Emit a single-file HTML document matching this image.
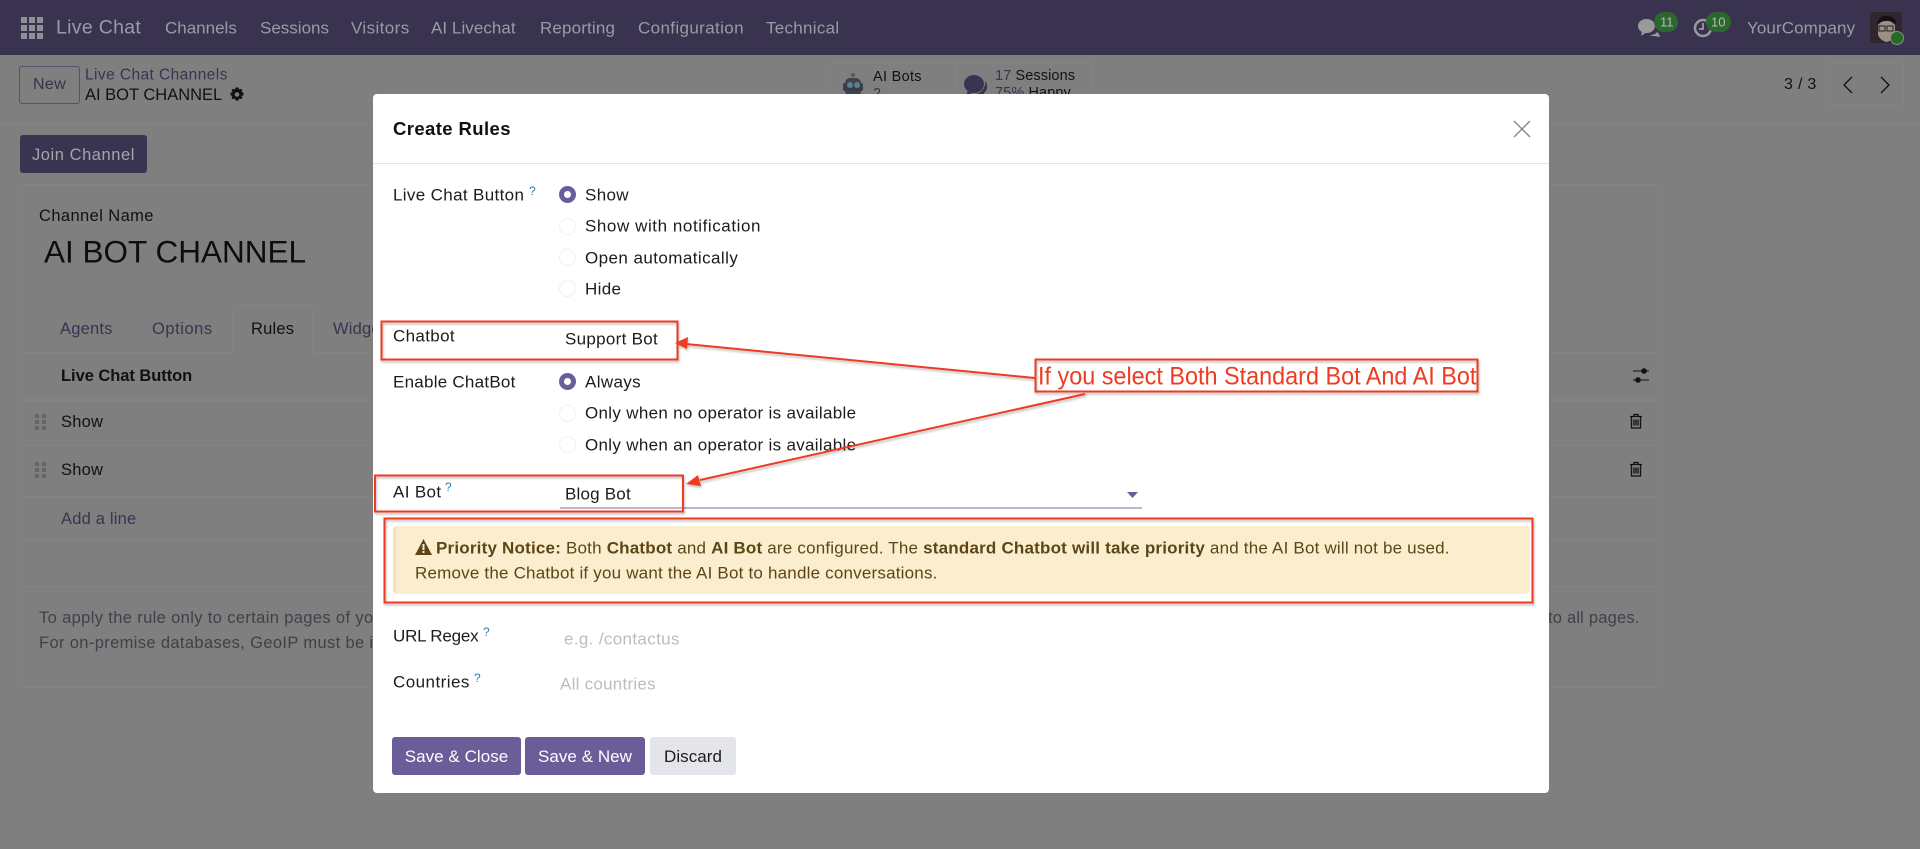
<!DOCTYPE html>
<html><head><meta charset="utf-8"><title>Create Rules</title>
<style>
html,body{margin:0;padding:0;width:1920px;height:849px;overflow:hidden;background:#7f7f7f;font-family:"Liberation Sans",sans-serif}
.t{position:absolute;white-space:nowrap;line-height:1;transform:translateY(-50%);font-size:17px;letter-spacing:.35px;color:#111}
.b{position:absolute;box-sizing:border-box}
.n{color:#9c9aa3;font-size:17px;letter-spacing:.1px}
.s{color:#3a3450}
.q{color:#2a7fb5;font-size:12px;letter-spacing:0}
.r{position:absolute;box-sizing:border-box;width:17px;height:17px;border-radius:50%;border:1px solid #f1f1f1;background:#fff}
.r.c{border:0;background:#6b5e98}
.r.c:after{content:"";position:absolute;left:5px;top:5px;width:7px;height:7px;border-radius:50%;background:#fff}
.m{color:#1c1c1c}
.bt{position:absolute;box-sizing:border-box;top:737px;height:38px;border-radius:3px;background:#6b5e98;color:#fff;font-size:17px;letter-spacing:.05px;line-height:39px;text-align:center}
#modal{position:absolute;left:373px;top:94px;width:1176px;height:699px;background:#fff;border-radius:4px}
.al{color:#5d4616;font-size:17px;letter-spacing:.2px}
.l{position:absolute;left:21px;width:1640px;height:1px;background:#848484}
</style></head><body>
<!-- navbar -->
<div class="b" style="left:0;top:0;width:1920px;height:55px;background:#393350;border-bottom:1px solid #35304a"></div>
<svg style="position:absolute;left:21px;top:17px" width="22" height="22" fill="#8f8e96"><rect width="6" height="6"/><rect x="8" width="6" height="6"/><rect x="16" width="6" height="6"/><rect y="8" width="6" height="6"/><rect x="8" y="8" width="6" height="6"/><rect x="16" y="8" width="6" height="6"/><rect y="16" width="6" height="6"/><rect x="8" y="16" width="6" height="6"/><rect x="16" y="16" width="6" height="6"/></svg>
<span class="t n" style="left:56px;top:28px;font-size:19.5px;letter-spacing:.3px">Live Chat</span>
<span class="t n" style="left:165px;top:28px;letter-spacing:0">Channels</span>
<span class="t n" style="left:260px;top:28px;letter-spacing:0">Sessions</span>
<span class="t n" style="left:351px;top:28px;letter-spacing:.4px">Visitors</span>
<span class="t n" style="left:431px;top:28px;letter-spacing:.05px">AI Livechat</span>
<span class="t n" style="left:540px;top:28px;letter-spacing:.15px">Reporting</span>
<span class="t n" style="left:638px;top:28px;letter-spacing:.37px">Configuration</span>
<span class="t n" style="left:766px;top:28px;letter-spacing:.28px">Technical</span>
<svg style="position:absolute;left:1637px;top:16px" width="24" height="22" fill="#9a9a9e"><ellipse cx="9.500" cy="10" rx="8.500" ry="7"/><path d="M5 15l-1 5 6-4zM13 19c3 0 6-1 7-3 2 1 3 5 3 5l-6-1c-1 0-3 0-4-1z"/></svg>
<span class="b" style="left:1654px;top:12px;width:24px;height:20px;border-radius:10px;background:#2b672e"></span>
<span class="t" style="left:1660px;top:22px;font-size:13px;letter-spacing:0;color:#b4bcb2">11</span>
<svg style="position:absolute;left:1693px;top:16px" width="20" height="22" fill="none" stroke="#9a9a9e" stroke-width="2.500"><circle cx="10" cy="12" r="8"/><path d="M10 7v6H6" stroke-width="1.800"/></svg>
<span class="b" style="left:1706px;top:12px;width:25px;height:20px;border-radius:10px;background:#2b672e"></span>
<span class="t" style="left:1711px;top:22px;font-size:13px;letter-spacing:0;color:#b4bcb2">10</span>
<span class="t n" style="left:1747px;top:28px">YourCompany</span>
<svg style="position:absolute;left:1870px;top:12px" width="34" height="34"><rect width="32" height="31" rx="3" fill="#2f2630"/><path d="M8 13q8-9 17 0v10q-4 7-9 7-6-2-8-7z" fill="#9a9088"/><path d="M7 12q2-9 10-8 9 0 9 8-6-4-10-3-5 0-9 3z" fill="#111"/><rect x="9" y="14" width="6" height="5" fill="none" stroke="#222"/><rect x="17" y="14" width="6" height="5" fill="none" stroke="#222"/><circle cx="27" cy="26" r="6.500" fill="#256b28" stroke="#8d8d8d" stroke-width="1"/></svg>

<!-- control panel -->
<div class="b" style="left:0;top:123px;width:1920px;height:1px;background:#858585"></div>
<div class="b" style="left:19px;top:66px;width:61px;height:38px;border:1px solid #55526a;border-radius:3px"></div>
<span class="t" style="left:33px;top:85px;font-size:16px;color:#36324a">New</span>
<span class="t s" style="left:85px;top:75px;font-size:15.500px;letter-spacing:.42px">Live Chat Channels</span>
<span class="t" style="left:85px;top:95px;font-size:16.500px;letter-spacing:0">AI BOT CHANNEL</span>
<svg style="position:absolute;left:229px;top:86px" width="16" height="17" viewBox="0 0 16 16"><path d="M6.500 1h3l.5 2 2-.8 1.500 1.500-1 1.800 2 .8v2.400l-2 .8 1 1.800-1.500 1.500-2-.8-.5 2h-3l-.5-2-2 .8-1.500-1.500 1-1.800-2-.8V6.300l2-.8-1-1.800L4 2.200l2 .8z" fill="#111"/><circle cx="8" cy="8" r="2.300" fill="#7f7f7f"/></svg>
<div class="b" style="left:830px;top:63px;width:262px;height:42px;border:1px solid #838383;border-radius:2px"></div>
<div class="b" style="left:955px;top:63px;width:1px;height:42px;background:#838383"></div>
<svg style="position:absolute;left:842px;top:72px" width="22" height="26"><circle cx="11" cy="3" r="2" fill="#6a5a30"/><rect x="3" y="6" width="16" height="18" rx="5" fill="#3f424c"/><rect x="1" y="11" width="20" height="8" rx="2" fill="#3a3d47"/><circle cx="8" cy="13" r="3" fill="#5d7f8c"/><circle cx="15" cy="13" r="3" fill="#5d7f8c"/></svg>
<span class="t" style="left:873px;top:77px;font-size:14.500px;letter-spacing:.3px">AI Bots</span>
<span class="t s" style="left:873px;top:94px;font-size:14.500px">2</span>
<svg style="position:absolute;left:963px;top:74px" width="26" height="24" fill="#3a3450"><ellipse cx="11" cy="10" rx="10" ry="9"/><path d="M5 16l-2 6 8-4z"/><path d="M22 7c3 3 3 9-1 12l1 4-6-3-3 0c5-1 10-6 9-13z"/></svg>
<span class="t" style="left:995px;top:76px;font-size:14.500px;letter-spacing:.1px"><span class="s">17</span> Sessions</span>
<span class="t" style="left:995px;top:93px;font-size:14.500px;letter-spacing:.1px"><span class="s">75%</span> Happy</span>
<span class="t" style="left:1784px;top:85px;font-size:16px;letter-spacing:.3px">3 / 3</span>
<div class="b" style="left:1826px;top:63px;width:78px;height:42px;border:1px solid #838383;border-radius:2px"></div>
<svg style="position:absolute;left:1840px;top:75px" width="54" height="20" fill="none" stroke="#111" stroke-width="1.300"><path d="M12 2L4 10l8 8M41 2l8 8-8 8"/></svg>

<div class="b" style="left:20px;top:135px;width:127px;height:38px;border-radius:3px;background:#3a3450"></div>
<span class="t" style="left:32px;top:155px;color:#a5a3ac;font-size:16.500px;letter-spacing:.55px">Join Channel</span>

<!-- sheet -->
<div class="b" style="left:18px;top:184px;width:1644px;height:504px;border:1px solid #848484"></div>
<span class="t" style="left:39px;top:216px;font-size:16.500px;letter-spacing:.4px">Channel Name</span>
<span class="t" style="left:44px;top:252px;font-size:31.500px;letter-spacing:0;color:#0d0d0d">AI BOT CHANNEL</span>
<div class="l" style="top:352px"></div>
<div class="b" style="left:232px;top:305px;width:81px;height:48px;border:1px solid #848484;border-bottom:1px solid #7f7f7f;border-radius:3px 3px 0 0"></div>
<span class="t s" style="left:60px;top:329px;font-size:16.500px;letter-spacing:.2px">Agents</span>
<span class="t s" style="left:152px;top:329px;font-size:16.500px;letter-spacing:.55px">Options</span>
<span class="t" style="left:251px;top:329px;font-size:16.500px;letter-spacing:.2px">Rules</span>
<span class="t s" style="left:333px;top:329px;font-size:16.500px;letter-spacing:.2px">Widgets</span>
<span class="t" style="left:61px;top:376px;font-size:16.500px;font-weight:bold;letter-spacing:-.05px">Live Chat Button</span>
<div class="l" style="top:398px"></div>
<div class="l" style="top:400px"></div>
<div class="l" style="top:445px"></div>
<div class="l" style="top:496px"></div>
<div class="l" style="top:539px"></div>
<div class="l" style="top:586px"></div>
<svg style="position:absolute;left:35px;top:414px" width="11" height="16" fill="#666"><rect width="4" height="4"/><rect x="7" width="4" height="4"/><rect y="6" width="4" height="4"/><rect x="7" y="6" width="4" height="4"/><rect y="12" width="4" height="4"/><rect x="7" y="12" width="4" height="4"/></svg>
<svg style="position:absolute;left:35px;top:462px" width="11" height="16" fill="#666"><rect width="4" height="4"/><rect x="7" width="4" height="4"/><rect y="6" width="4" height="4"/><rect x="7" y="6" width="4" height="4"/><rect y="12" width="4" height="4"/><rect x="7" y="12" width="4" height="4"/></svg>
<span class="t" style="left:61px;top:422px;font-size:16.500px;letter-spacing:.2px">Show</span>
<span class="t" style="left:61px;top:470px;font-size:16.500px;letter-spacing:.2px">Show</span>
<span class="t s" style="left:61px;top:519px;font-size:16.500px;letter-spacing:.2px">Add a line</span>
<span class="t" style="left:39px;top:618px;font-size:16.500px;letter-spacing:.36px;color:#40404a">To apply the rule only to certain pages of your website</span>
<span class="t" style="left:39px;top:643px;font-size:16.500px;letter-spacing:.36px;color:#40404a">For on-premise databases, GeoIP must be installed</span>
<span class="t" style="left:1548px;top:618px;font-size:16.500px;letter-spacing:.2px;color:#40404a">to all pages.</span>
<svg style="position:absolute;left:1632px;top:367px" width="18" height="18" fill="#111" stroke="#111"><path d="M1 4h16M1 13h16" stroke-width="1"/><circle cx="12" cy="4" r="2.300"/><circle cx="6" cy="13" r="2.300"/></svg>
<svg style="position:absolute;left:1629px;top:413px" width="14" height="16" fill="none" stroke="#111" stroke-width="1.300"><path d="M1 3.500h12M5 3.500V1.500h4v2M2.500 3.500v11.500h9V3.500M5 6.500v6M7 6.500v6M9 6.500v6"/></svg>
<svg style="position:absolute;left:1629px;top:461px" width="14" height="16" fill="none" stroke="#111" stroke-width="1.300"><path d="M1 3.500h12M5 3.500V1.500h4v2M2.500 3.500v11.500h9V3.500M5 6.500v6M7 6.500v6M9 6.500v6"/></svg>

<!-- modal -->
<div id="modal"></div>
<div class="b" style="left:373px;top:163px;width:1176px;height:1px;background:#e6e6e6"></div>
<span class="t" style="left:393px;top:129px;font-size:18.500px;font-weight:bold;letter-spacing:.4px;color:#111">Create Rules</span>
<svg style="position:absolute;left:1512px;top:120px" width="20" height="18" stroke="#888" stroke-width="1.400"><path d="M2 1l16 16M18 1L2 17"/></svg>

<span class="t m" style="left:393px;top:195px">Live Chat Button</span><span class="t q" style="left:529px;top:191px">?</span>
<span class="r c" style="left:559px;top:186px"></span><span class="t m" style="left:585px;top:195px">Show</span>
<span class="r" style="left:559px;top:218px"></span><span class="t m" style="left:585px;top:226px;letter-spacing:.57px">Show with notification</span>
<span class="r" style="left:559px;top:249px"></span><span class="t m" style="left:585px;top:258px;letter-spacing:.43px">Open automatically</span>
<span class="r" style="left:559px;top:280px"></span><span class="t m" style="left:585px;top:289px">Hide</span>
<span class="t m" style="left:393px;top:336px">Chatbot</span>
<span class="t m" style="left:565px;top:339px;letter-spacing:.3px">Support Bot</span>
<span class="t m" style="left:393px;top:382px;letter-spacing:.25px">Enable ChatBot</span>
<span class="r c" style="left:559px;top:373px"></span><span class="t m" style="left:585px;top:382px">Always</span>
<span class="r" style="left:559px;top:405px"></span><span class="t m" style="left:585px;top:413px;letter-spacing:.31px">Only when no operator is available</span>
<span class="r" style="left:559px;top:436px"></span><span class="t m" style="left:585px;top:445px;letter-spacing:.31px">Only when an operator is available</span>
<span class="t m" style="left:393px;top:492px">AI Bot</span><span class="t q" style="left:445px;top:487px">?</span>
<span class="t m" style="left:565px;top:494px;letter-spacing:.2px">Blog Bot</span>
<div class="b" style="left:560px;top:507px;width:582px;height:2px;background:#bab6cf"></div>
<svg style="position:absolute;left:1127px;top:492px" width="11" height="6"><path d="M0 0h11L5.500 6z" fill="#6b5e98"/></svg>

<div class="b" style="left:393px;top:526px;width:1137px;height:68px;background:#fbeecf;border-left:3px solid #f3e2b8;border-radius:4px"></div>
<svg style="position:absolute;left:415px;top:539px" width="17" height="16"><path d="M8.500 0L17 16H0z" fill="#5d4616"/><rect x="7.500" y="5" width="2" height="6" fill="#fbeecf"/><rect x="7.500" y="12" width="2" height="2" fill="#fbeecf"/></svg>
<span class="t al" style="left:436px;top:548px"><b>Priority Notice:</b> Both <b>Chatbot</b> and <b>AI Bot</b> are configured. The <b>standard Chatbot will take priority</b> and the AI Bot will not be used.</span>
<span class="t al" style="left:415px;top:573px">Remove the Chatbot if you want the AI Bot to handle conversations.</span>

<span class="t m" style="left:393px;top:636px;letter-spacing:-.2px">URL Regex</span><span class="t q" style="left:483px;top:632px">?</span>
<span class="t" style="left:564px;top:639px;color:#bcbcc4">e.g. /contactus</span>
<span class="t m" style="left:393px;top:682px;letter-spacing:.45px">Countries</span><span class="t q" style="left:474px;top:678px">?</span>
<span class="t" style="left:560px;top:684px;color:#bcbcc4;letter-spacing:.25px">All countries</span>

<div class="bt" style="left:392px;width:129px">Save &amp; Close</div>
<div class="bt" style="left:525px;width:120px">Save &amp; New</div>
<div class="bt" style="left:650px;width:86px;background:#e3e5ea;color:#1c1c1c">Discard</div>

<!-- annotations -->
<svg style="position:absolute;left:0;top:0;filter:drop-shadow(1px 2px 1px rgba(0,0,0,.25))" width="1920" height="849" fill="none" stroke="#ee3b22" stroke-width="2">
<rect x="381.500" y="321.500" width="296" height="38"/>
<rect x="375" y="475.500" width="308" height="36"/>
<rect x="384.500" y="518.500" width="1148" height="84"/>
<rect x="1035.500" y="359.500" width="442" height="32"/>
<path d="M1035 378L686 344"/><path d="M1085 394L700 480"/>
<path d="M675 343l13-6-1 12z" fill="#ee3b22" stroke="none"/>
<path d="M686 484l12-9 3 11z" fill="#ee3b22" stroke="none"/>
</svg>
<span class="t" style="left:1038px;top:377px;font-size:25px;letter-spacing:0;color:#ee3b22;transform-origin:left center;transform:translateY(-50%) scaleX(.936)">If you select Both Standard Bot And AI Bot</span>
</body></html>
